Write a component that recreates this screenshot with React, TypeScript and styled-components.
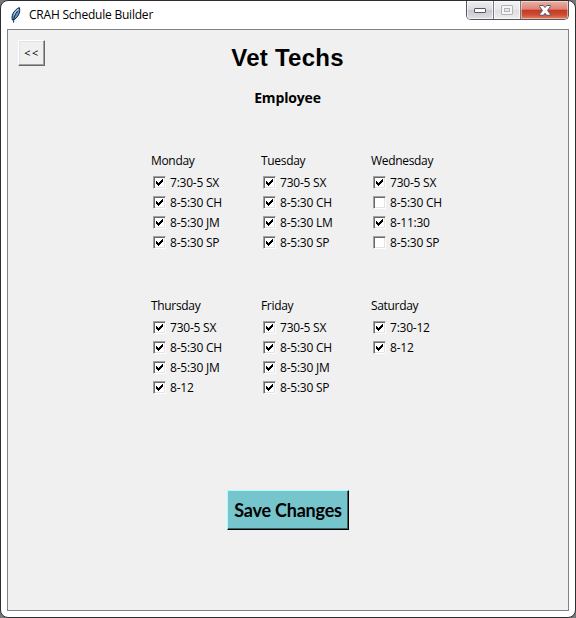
import React from "react";
import styled, { createGlobalStyle } from "styled-components";

const Global = createGlobalStyle`
  * { box-sizing: border-box; }
  body { margin: 0; background: #77777b; overflow: hidden; }
  button { font: inherit; padding: 0; margin: 0; }
`;

const Window = styled.div`
  width: 576px;
  height: 618px;
  display: flex;
  flex-direction: column;
  padding: 0 6px 6px;
  border: 1px solid #2e2e31;
  border-radius: 8px;
  background: #fff;
  color: #000;
  font: 12px/16px "Open Sans", "Noto Sans", sans-serif;
`;

const TitleBar = styled.header`
  height: 28px;
  flex: none;
  display: flex;
  align-items: flex-start;
`;

const Feather = styled.svg`
  width: 16px;
  height: 16px;
  margin: 6px 0 0 1px;
`;

const Title = styled.h1`
  margin: 6px 0 0 5px;
  font-size: 12px;
  line-height: 16px;
  font-weight: 400;
  letter-spacing: -0.22px;
  white-space: nowrap;
`;

const Controls = styled.div`
  display: flex;
  height: 19px;
  margin-left: auto;
  border: 1px solid #55555e;
  border-top: 0;
  border-radius: 0 0 5px 5px;
  overflow: hidden;
`;

const controlFill = {
  min: "linear-gradient(#efeff1, #dcdce0 48%, #c6c6cc 50%, #dfdfe4)",
  max: "linear-gradient(#f3f3f4, #e8e8e9 48%, #dfdfe1 50%, #ededee)",
  close: "linear-gradient(#eab0a5 0%, #dc8575 46%, #c23a24 50%, #cd4a2e 75%, #e58066 100%)",
};

const Control = styled.button<{ $kind: keyof typeof controlFill }>`
  width: ${(p) => (p.$kind === "close" ? 47 : 27)}px;
  height: 18px;
  display: flex;
  align-items: center;
  justify-content: center;
  border: 0;
  border-right: ${(p) => (p.$kind === "close" ? "0" : "1px solid #77777f")};
  box-shadow: inset 0 0 0 1px ${(p) => (p.$kind === "close" ? "#ffffff70" : "#ffffffb0")};
  background: ${(p) => controlFill[p.$kind]};
`;

const Client = styled.main`
  flex: 1;
  display: flex;
  flex-direction: column;
  align-items: center;
  border: 1px solid #828282;
  background: #f0f0f0;
`;

const TopRow = styled.div`
  width: 100%;
  height: 57px;
  flex: none;
  display: grid;
  grid-template-columns: 37px 1fr 37px;
  padding: 10px 0 0 10px;
  align-items: start;
`;

const BackButton = styled.button`
  width: 27px;
  height: 26px;
  border: 1px solid;
  border-color: #fff #696969 #696969 #fff;
  box-shadow: inset -1px -1px #a0a0a0, inset 1px 1px #e3e3e3;
  background: #f0f0f0;
  font-size: 11px;
  letter-spacing: 1.5px;
  padding: 0 0 1px 1px;
  color: #000;
`;

const Heading = styled.h2`
  margin: 4px 11px 0 0;
  justify-self: center;
  font: bold 24px/28px "Liberation Sans", Arial, sans-serif;
  letter-spacing: 0.25px;
  white-space: nowrap;
`;

const Subheading = styled.h3`
  margin: 2px 1px 0 0;
  font: bold 14px/18px "Open Sans", "Noto Sans", sans-serif;
  letter-spacing: -0.15px;
`;

const Days = styled.div`
  display: grid;
  grid-template-columns: repeat(3, 110px);
  grid-template-rows: 145px 145px;
  width: 330px;
  margin: 46px 0 0 56px;
`;

const Day = styled.section`
  display: flex;
  flex-direction: column;
`;

const DayName = styled.h4`
  margin: 0 0 4px;
  font-size: 12px;
  line-height: 16px;
  font-weight: 400;
  letter-spacing: -0.32px;
`;

const Shift = styled.label`
  height: 20px;
  display: flex;
  align-items: flex-start;
  padding: 2px 0 0 2px;
  gap: 4px;
  white-space: nowrap;
  letter-spacing: -0.23px;
`;

const Box = styled.span`
  width: 13px;
  height: 13px;
  margin-top: 1px;
  display: flex;
  padding: 2px;
  border: 1px solid;
  border-color: #a0a0a0 #fff #fff #a0a0a0;
  box-shadow: inset 1px 1px #696969, inset -1px -1px #e3e3e3;
  background: #fff;
`;

const SaveButton = styled.button`
  width: 122px;
  height: 40px;
  margin-top: 47px;
  border: 1px solid;
  border-color: #a8ffff #000 #000 #a8ffff;
  box-shadow: inset -1px -1px #3b6366;
  background: #76c5cc;
  color: #000;
  font: bold 18px/22px Lato, "Open Sans", sans-serif;
  letter-spacing: -0.2px;
  white-space: nowrap;
`;

type Entry = [label: string, checked: boolean];

const schedule: { day: string; shifts: Entry[] }[] = [
  { day: "Monday", shifts: [["7:30-5 SX", true], ["8-5:30 CH", true], ["8-5:30 JM", true], ["8-5:30 SP", true]] },
  { day: "Tuesday", shifts: [["730-5 SX", true], ["8-5:30 CH", true], ["8-5:30 LM", true], ["8-5:30 SP", true]] },
  { day: "Wednesday", shifts: [["730-5 SX", true], ["8-5:30 CH", false], ["8-11:30", true], ["8-5:30 SP", false]] },
  { day: "Thursday", shifts: [["730-5 SX", true], ["8-5:30 CH", true], ["8-5:30 JM", true], ["8-12", true]] },
  { day: "Friday", shifts: [["730-5 SX", true], ["8-5:30 CH", true], ["8-5:30 JM", true], ["8-5:30 SP", true]] },
  { day: "Saturday", shifts: [["7:30-12", true], ["8-12", true]] },
];

const CheckMark = () => (
  <svg width="7" height="7" shapeRendering="crispEdges">
    <path d="M0 2h1v1h1v1h1v-1h1v-1h1v-1h1v-1h1v3h-1v1h-1v1h-1v1h-1v1h-1v-1h-1v-1h-1z" />
  </svg>
);

export default function App() {
  return (
    <>
      <Global />
      <Window>
        <TitleBar>
          <Feather viewBox="0 0 16 16">
            <path d="M4.4 13C3.3 9.500 4.600 4 11.300.5c1.300 3.500-.2 8.500-4.800 12z" fill="#5a94d6" stroke="#14202e" />
            <path d="M6 8.500C7 5.500 8.500 3.500 10.300 2.200" fill="none" stroke="#a9d0f5" strokeWidth="1.300" />
            <path d="M5.500 15.500C5.600 11 7 7 9.700 4" fill="none" stroke="#182435" />
          </Feather>
          <Title>CRAH Schedule Builder</Title>
          <Controls>
            <Control $kind="min" aria-label="Minimize">
              <svg width="13" height="6">
                <rect x=".5" y="1.500" width="11" height="4" rx=".5" fill="#fff" stroke="#535666" />
              </svg>
            </Control>
            <Control $kind="max" aria-label="Maximize">
              <svg width="12" height="10">
                <rect x=".5" y=".5" width="11" height="9" rx=".5" fill="#f5f5f5" stroke="#b4b4b8" />
                <rect x="3.500" y="3.500" width="5" height="3" fill="#e8e8ea" stroke="#b4b4b8" />
              </svg>
            </Control>
            <Control $kind="close" aria-label="Close">
              <svg width="12" height="11" viewBox="0 0 12 11">
                <path
                  d="M.7.500h3.600l1.700 2 1.700-2h3.600v1.200L8.500 5.500l2.800 3.500v1.300H7.700L6 8.300l-1.700 2H.7V9l2.800-3.500L.7 1.700z"
                  fill="#fff"
                  stroke="#555468"
                />
              </svg>
            </Control>
          </Controls>
        </TitleBar>
        <Client>
          <TopRow>
            <BackButton>&lt;&lt;</BackButton>
            <Heading>Vet Techs</Heading>
          </TopRow>
          <Subheading>Employee</Subheading>
          <Days>
            {schedule.map(({ day, shifts }) => (
              <Day key={day}>
                <DayName>{day}</DayName>
                {shifts.map(([label, checked]) => (
                  <Shift key={label}>
                    <Box role="checkbox" aria-checked={checked}>
                      {checked && <CheckMark />}
                    </Box>
                    {label}
                  </Shift>
                ))}
              </Day>
            ))}
          </Days>
          <SaveButton>Save Changes</SaveButton>
        </Client>
      </Window>
    </>
  );
}
